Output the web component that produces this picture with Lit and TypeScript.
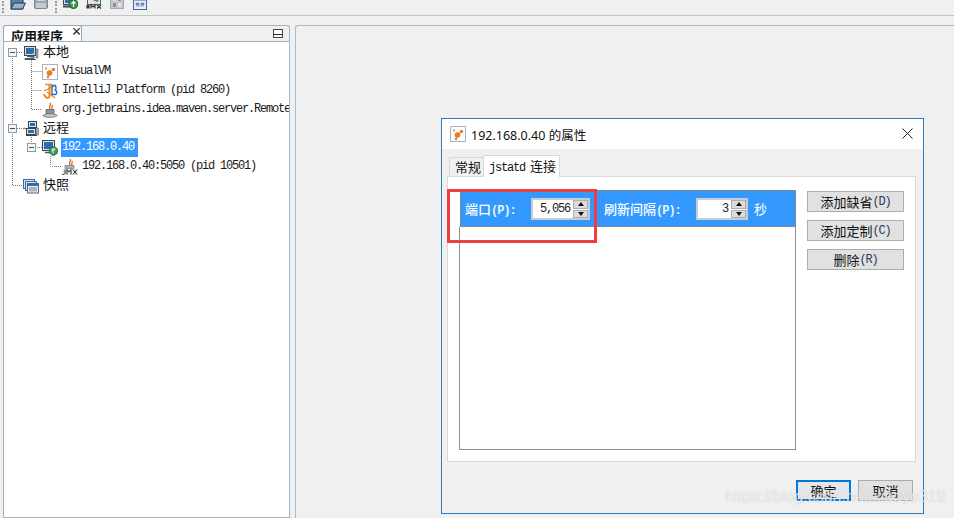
import { LitElement, html, svg, css } from "lit";
import { customElement } from "lit/decorators.js";

const ico = (body: unknown, w = 16, h = 16) =>
  html`<svg width=${w} height=${h} viewBox="0 0 16 16">${body}</svg>`;

const orangeDots = html`<svg width="16" height="16" viewBox="0 0 16 16">
  <rect x=".5" y=".5" width="15" height="15" fill="#fdfdfd" stroke="#a9b4bf"/>
  <circle cx="7.500" cy="9" r="2.800" fill="#ee7a22"/><circle cx="11.500" cy="5.500" r="1.700" fill="#ee7a22"/>
  <circle cx="4" cy="4.500" r="1" fill="#ee7a22"/><circle cx="6" cy="13" r="1.200" fill="#ee7a22"/>
  <path d="M8 9L11.500 5M8 9L6 13" stroke="#ee7a22"/></svg>`;

const monitor = ico(svg`<rect x="1.500" y="1.500" width="11" height="9" fill="#d8dde4" stroke="#3c4552"/>
  <rect x="3" y="3" width="8" height="6" fill="#2f6da8"/>
  <path d="M13 4h2v9h-2z" fill="#aab2bc" stroke="#555f6b" stroke-width=".6"/>
  <path d="M4 11.500h7v2H2v1h11" fill="#99a2ad" stroke="#4b5460"/>
  <rect x="9" y="8" width="2" height="1" fill="#46c04a"/>`);

const intellij = ico(svg`<path d="M1.500 11.500l3 3c1.500 1 3 0 3-2V2" fill="none" stroke="#f28a1c" stroke-width="2"/>
  <path d="M3 1.500h7M2 8l12-6M5 9l8 6" fill="none" stroke="#f28a1c" stroke-width="1.300"/>
  <path d="M10 2.500v9h3c2.300 0 2.300-4.500-.5-4.500 2 0 2-4.500 0-4.500z" fill="none" stroke="#2b6cc0" stroke-width="1.400"/>`);

const javaCup = ico(svg`<path d="M8 1c2 2-2 3 0 6M10 3c1 2-1 2 0 4" fill="none" stroke="#d9651c" stroke-width="1.300"/>
  <path d="M4 7.500h8v3c0 2-2 2.500-4 2.500s-4-.5-4-2.500z" fill="#8d949c" stroke="#4d545c" stroke-width=".7"/>
  <ellipse cx="8" cy="13.500" rx="7" ry="1.800" fill="#c5cad0" stroke="#555c64" stroke-width=".7"/>`);

const network = ico(svg`<rect x="5.500" y="0.500" width="8" height="6" fill="#dfe3e8" stroke="#39434f"/><rect x="7" y="2" width="5" height="3" fill="#2f6da8"/>
  <rect x="3.500" y="7.500" width="9" height="6" fill="#dfe3e8" stroke="#39434f"/><rect x="5" y="9" width="6" height="3" fill="#2f6da8"/>
  <path d="M3 14.500h11" stroke="#39434f"/><path d="M0 7.500h3" stroke="#c08020" stroke-width="1.400"/>
  <rect x="13" y="7" width="2.500" height="7" fill="#aab2bc" stroke="#555f6b" stroke-width=".6"/>`);

const remoteHost = ico(svg`<rect x=".5" y=".5" width="12" height="10" fill="#dfe3e8" stroke="#3c4552"/><rect x="2" y="2" width="9" height="7" fill="#2f6da8"/>
  <path d="M3 12.500h8" stroke="#4b5460" stroke-width="1.500"/>
  <circle cx="11.500" cy="11" r="4.300" fill="#3c9a46" stroke="#2a5f82" stroke-width=".8"/>
  <path d="M9.500 9l3-1 1 2-2 1 .5 3-2-2z" fill="#bfe6c4"/>`);

const jmxApp = ico(svg`<path d="M8 0c2 2-2 3 0 6M10 2c1 2-1 2 0 4" fill="none" stroke="#d9651c" stroke-width="1.300"/>
  <path d="M3 6.500h9v3H3z" fill="#a8aeb5" stroke="#666d75" stroke-width=".6"/>
  <rect x="0" y="10" width="16" height="6" fill="#e8e8e8"/>
  <path d="M3 10.500v4l-1 1H.5M5 15.500v-5l2 2.500 2-2.500v5M11 10.500l4 5M15 10.500l-4 5" fill="none" stroke="#2a2f35" stroke-width="1"/>`);

const snapshots = ico(svg`<rect x=".5" y="1.500" width="11" height="9" fill="#dbe4ef" stroke="#3d6aa0"/>
  <rect x="2.500" y="3.500" width="11" height="9" fill="#dbe4ef" stroke="#3d6aa0"/>
  <rect x="4.500" y="5.500" width="11" height="9.500" fill="#eef2f7" stroke="#3d6aa0"/>
  <rect x="6" y="9" width="8" height="4.500" fill="#a8b4c2"/><rect x="5" y="6" width="10" height="2" fill="#3d6aa0"/>`);

const tools = [
  ico(svg`<path d="M1 15V3h5l1.500 2H13v10z" fill="#5b7fa0" stroke="#26384a"/><path d="M1 15l3-6h11.500l-3 6z" fill="#8fb3d2" stroke="#26384a"/><path d="M8 3l4-2 3 3" fill="none" stroke="#2f6da8"/>`),
  ico(svg`<rect x="1.500" y="2.500" width="13" height="12" rx="1.500" fill="#9ea5ad" stroke="#7f868e"/><rect x="4" y="3" width="8" height="4" fill="#d6dade"/><rect x="3" y="9" width="10" height="5" fill="#c5cace"/>`),
  ico(svg`<rect x="1.500" y="1.500" width="11" height="9" fill="#dfe3e8" stroke="#3c4552"/><rect x="3" y="3" width="8" height="6" fill="#2f6da8"/><path d="M1 12.500h12" stroke="#3c4552" stroke-width="2"/><circle cx="11.500" cy="10" r="4.500" fill="#3c9a46" stroke="#1f5d2a"/><path d="M11.500 7v6M9.500 9.500l2-2 2 2" fill="none" stroke="#fff" stroke-width="1.200"/>`),
  ico(svg`<rect x="1.500" y="1.500" width="13" height="9" fill="#dfe3e8" stroke="#555f6b"/><path d="M4 4l8 3" stroke="#3c9a46" stroke-width="2"/><path d="M1 14.500V11l1 2.500 1-2.500v3.500M5 14.500V11l2 2 2-2v3.500M11 11l4 3.500M15 11l-4 3.500" fill="none" stroke="#2a2f35" stroke-width="1.100"/>`),
  ico(svg`<rect x="1.500" y="1.500" width="13" height="13" fill="#c4c8cc" stroke="#a3a8ae"/><rect x="4" y="3" width="3" height="4" fill="#e2e4e6"/><rect x="9" y="3" width="3" height="4" fill="#8e9499"/><rect x="4" y="9" width="3" height="4" fill="#8e9499"/><rect x="9" y="9" width="3" height="4" fill="#e2e4e6"/>`),
  ico(svg`<rect x="1.500" y="3.500" width="13" height="12" fill="#e8eef5" stroke="#3d6aa0"/><rect x="1.500" y="3.500" width="13" height="3" fill="#3d6aa0"/><path d="M4 9h3v2H4zM9 9h3v2H9zM4 12h8" fill="#88a" stroke="#5f7fa3" stroke-width=".6"/><path d="M5 0l3 3 3-3" fill="#3c9a46"/>`),
];

interface Row { level: "l0" | "l1" | "l2"; handle?: boolean; icon: unknown; text: string; cjk?: boolean; sel?: boolean }

const rows: Row[] = [
  { level: "l0", handle: true, icon: monitor, text: "本地", cjk: true },
  { level: "l1", icon: orangeDots, text: "VisualVM" },
  { level: "l1", icon: intellij, text: "IntelliJ Platform (pid 8260)" },
  { level: "l1", icon: javaCup, text: "org.jetbrains.idea.maven.server.RemoteMavenServer" },
  { level: "l0", handle: true, icon: network, text: "远程", cjk: true },
  { level: "l1", handle: true, icon: remoteHost, text: "192.168.0.40", sel: true },
  { level: "l2", icon: jmxApp, text: "192.168.0.40:5050 (pid 10501)" },
  { level: "l0", icon: snapshots, text: "快照", cjk: true },
];

@customElement("app-root")
export class AppRoot extends LitElement {
  static styles = css`
    :host { display: block; position: relative; width: 954px; height: 518px; overflow: hidden; background: #f0f0f0;
      font-family: "Noto Sans CJK SC", "Liberation Sans", sans-serif; color: #111; }
    .toolbar { height: 15px; border-bottom: 1px solid #c4c4c4; display: flex; align-items: flex-end; overflow: hidden; }
    .toolbar svg { display: block; flex: none; margin-bottom: 5px; margin-top: -6px; }
    .toolbar span { flex: none; }
    .grip { width: 1px; height: 12px; border-left: 2px dotted #9a9a9a; flex: none; margin-bottom: 2px; }
    .g1 { margin-left: 2px; margin-right: 5px; }
    .t2 { margin-left: 7px; }
    .g2 { margin-left: 6px; margin-right: 4px; }
    .t4 { margin-left: 8px; }
    .t5 { margin-left: 7px; }
    .t6 { margin-left: 7px; }

    .main { display: flex; height: 502px; padding: 9px 0 0 3px; box-sizing: border-box; }
    .panel { width: 287px; height: 493px; flex: none; display: flex; flex-direction: column; }
    .head { height: 16px; flex: none; display: flex; align-items: flex-end; position: relative;
      border: 1px solid #9fb4c9; border-bottom: none; border-radius: 3px 3px 0 0; box-sizing: border-box; background: #f0f0f0; }
    .tab { width: 79px; height: 16px; margin: -1px 0 0 -1px; flex: none; box-sizing: border-box; background: #fff;
      border: 1px solid #8faac4; border-bottom: none; border-radius: 3px 3px 0 0; display: flex; align-items: flex-start;
      padding: 0 0 0 7px; overflow: hidden; font-size: 13px; font-weight: 700; line-height: 19px; white-space: nowrap; }
    .tab b { font-size: 11px; margin-left: 8px; line-height: 11px; color: #333; }
    .minbtn { margin: 0 6px 3px auto; width: 10px; height: 9px; box-sizing: border-box; border: 1px solid #444; background: linear-gradient(#fff 50%, #222 50%, #222 70%, #fff 70%); }
    .treebox { flex: 1; background: #fff; border: 1px solid #9fb4c9; position: relative; padding-top: 1px; }
    .lines { position: absolute; left: 0; top: 0; pointer-events: none; }
    .row { height: 19px; display: flex; align-items: center; position: relative; white-space: nowrap; overflow: hidden; }
    .l0 { padding-left: 4px; } .l1 { padding-left: 23px; } .l2 { padding-left: 43px; }
    .slot { width: 15px; flex: none; display: flex; }
    .hbox { width: 9px; height: 9px; box-sizing: border-box; border: 1px solid #8e99a5; background: #f4f5f7; display: flex; align-items: center; justify-content: center; }
    .hbox i { display: block; width: 5px; height: 1px; background: #35507a; }
    .row svg { flex: none; }
    .label { margin-left: 3px; padding: 0 1px; line-height: 19px; }
    .mono { font-family: "Liberation Mono", "DejaVu Sans Mono", monospace; font-size: 12px; letter-spacing: -1.200px; color: #1a1a1a; }
    .cjk { font-size: 13px; line-height: 15px; margin-bottom: 5px; }
    .sel { background: #3399ff; color: #fff; padding-right: 4px; }
    .work { flex: 1; margin-left: 5px; height: 493px; border: 1px solid #a9bccd; border-right: none; border-bottom: none; border-radius: 3px 0 0 0; }

    .dialog { position: absolute; left: 441px; top: 118px; width: 483px; height: 396px; box-sizing: border-box;
      border: 1px solid #2a7dc4; background: #f0f0f0; display: flex; flex-direction: column; }
    .title { height: 30px; flex: none; background: #fff; display: flex; align-items: center; padding-left: 8px; font-size: 12.500px; }
    .title span { margin-left: 5px; font-family: "Noto Sans", "Noto Sans CJK SC", sans-serif; }
    .close { margin-left: auto; margin-right: 10px; margin-bottom: 1px; }
    .tabs { display: flex; align-items: flex-end; height: 22px; margin: 5px 0 0 7px; flex: none; font-size: 13px; white-space: nowrap; }
    .dtab { height: 19px; box-sizing: border-box; border: 1px solid #d9d9d9; border-bottom: none; background: #f0f0f0; padding-left: 5px; width: 35px; line-height: 18px; }
    .dtab.on { height: 22px; background: #fff; width: 77px; margin-left: -1px; line-height: 20px; position: relative; margin-bottom: -1px; padding-left: 5px; }
    .dtab .lat { font-size: 12px; letter-spacing: -1.200px; margin-right: 5px; }
    .card { width: 469px; height: 286px; margin-left: 5px; flex: none; box-sizing: border-box; background: #fff; border: 1px solid #d9d9d9;
      display: flex; padding: 13px 0 11px 11px; }
    .col { width: 337px; flex: none; display: flex; flex-direction: column; }
    .bar { height: 37px; margin-left: 1px; flex: none; box-sizing: border-box; background: #3399ff; border: 1px dotted #c5732a;
      display: flex; align-items: center; padding: 0 0 0 4px; color: #fff; font-size: 13px; font-weight: 500; white-space: nowrap; }
    .lab1 { width: 66px; flex: none; } .lab2 { width: 92px; flex: none; margin-left: 14px; }
    .bar .lat { font-weight: 700; font-size: 12px; letter-spacing: -1px; color: #e6f2ff; }
    .spin { height: 22px; box-sizing: border-box; border: 2px solid #c6ccd2; background: #fff; display: flex; align-items: stretch; flex: none; margin-top: 1px; }
    .s1 { width: 59px; } .s2 { width: 52px; }
    .val { flex: 1; text-align: right; padding-right: 3px; font-weight: 400; font-size: 12px; line-height: 18px; color: #222; font-family: "Liberation Mono", monospace; letter-spacing: -1.200px; }
    .steps { width: 15px; display: flex; flex-direction: column; gap: 1px; background: #fff; flex: none; }
    .steps div { flex: 1; background: #dcdcdc; border: 1px solid #adadad; display: flex; align-items: center; justify-content: center; }
    .up { width: 0; height: 0; border: 3px solid transparent; border-top: none; border-bottom: 4px solid #111; }
    .down { width: 0; height: 0; border: 3px solid transparent; border-bottom: none; border-top: 4px solid #111; }
    .unit { margin-left: 6px; font-weight: 400; }
    .table { flex: 1; border: 1px solid #8d8d98; border-top: none; background: #fff; }
    .btns { margin: 1px 0 0 11px; width: 97px; display: flex; flex-direction: column; gap: 8px; }
    .btn { height: 21px; box-sizing: border-box; background: #e1e1e1; border: 1px solid #adadad; display: flex; align-items: center; justify-content: center;
      font-size: 13px; color: #111; white-space: nowrap; }
    .btn .lat { font-size: 12px; letter-spacing: -1.200px; color: #2a3a60; }
    .lat { font-family: "Liberation Mono", monospace; }
    .foot { display: flex; justify-content: flex-end; gap: 7px; padding: 18px 10px 0 0; }
    .foot .btn { width: 55px; }
    .foot .ok { border: 2px solid #0078d7; background: #e4e6e9; }

    .red { position: absolute; left: 447px; top: 189px; width: 150px; height: 54px; box-sizing: border-box; border: 3px solid #f03c44; pointer-events: none; }
    .wm { position: absolute; left: 725px; top: 485px; font: 400 16px/24px "Liberation Sans", sans-serif;
      color: rgba(255,255,255,.7); text-shadow: 0 0 1px rgba(130,130,130,.45); white-space: nowrap; pointer-events: none; }
  `;

  private spinner(cls: string, value: string) {
    return html`<div class="spin ${cls}"><div class="val">${value}</div>
      <div class="steps"><div><i class="up"></i></div><div><i class="down"></i></div></div></div>`;
  }

  render() {
    return html`
      <div class="toolbar">
        <i class="grip g1"></i>${tools[0]}<span class="t2">${tools[1]}</span>
        <i class="grip g2"></i>${tools[2]}<span class="t4">${tools[3]}</span>
        <span class="t5">${tools[4]}</span><span class="t6">${tools[5]}</span>
      </div>
      <div class="main">
        <section class="panel">
          <div class="head">
            <div class="tab">应用程序<b>×</b></div>
            <div class="minbtn"></div>
          </div>
          <div class="treebox">
            <svg class="lines" width="285" height="200" viewBox="4 41 285 200" fill="none" stroke="#7a7a7a" stroke-dasharray="1 1">
              <path d="M12.500 55V184.500H23M17 51.500H23M17 127.500H23M31.500 59V108.500H42M31.500 70.500H42M31.500 89.500H42M31.500 136V141M35 146.500H42M50.500 155V165.500H62"/>
            </svg>
            ${rows.map(
              (r) => html`<div class="row ${r.level}">
                <div class="slot">${r.handle ? html`<div class="hbox"><i></i></div>` : ""}</div>
                ${r.icon}
                <span class="label ${r.cjk ? "cjk" : "mono"} ${r.sel ? "sel" : ""}">${r.text}</span>
              </div>`
            )}
          </div>
        </section>
        <div class="work"></div>
      </div>

      <div class="dialog">
        <div class="title">
          ${orangeDots}<span>192.168.0.40 的属性</span>
          <svg class="close" width="11" height="11" viewBox="0 0 11 11"><path d="M.5.5l10 10M10.500.5l-10 10" stroke="#222" fill="none"/></svg>
        </div>
        <div class="tabs">
          <div class="dtab">常规</div>
          <div class="dtab on"><span class="lat">jstatd</span>连接</div>
        </div>
        <div class="card">
          <div class="col">
            <div class="bar">
              <div class="lab1">端口<span class="lat">(P):</span></div>
              ${this.spinner("s1", "5,056")}
              <div class="lab2">刷新间隔<span class="lat">(P):</span></div>
              ${this.spinner("s2", "3")}
              <div class="unit">秒</div>
            </div>
            <div class="table"></div>
          </div>
          <div class="btns">
            <div class="btn">添加缺省<span class="lat">(D)</span></div>
            <div class="btn">添加定制<span class="lat">(C)</span></div>
            <div class="btn">删除<span class="lat">(R)</span></div>
          </div>
        </div>
        <div class="foot">
          <div class="btn ok">确定</div>
          <div class="btn">取消</div>
        </div>
      </div>
      <div class="red"></div>
      <div class="wm">https://blog.csdn.net/xiaoye319</div>
    `;
  }
}
